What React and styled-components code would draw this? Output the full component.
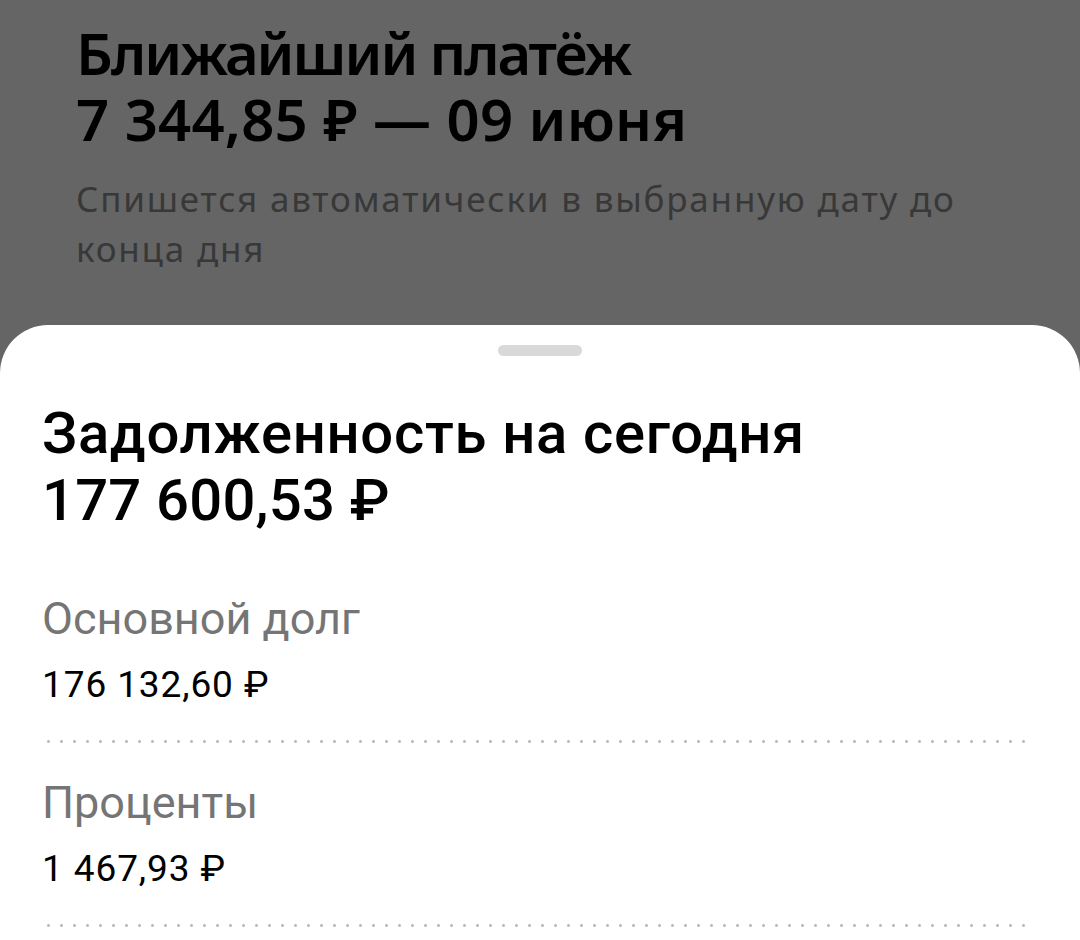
import React from 'react';
import styled, { createGlobalStyle } from 'styled-components';

const GlobalStyle = createGlobalStyle`
  html, body {
    margin: 0;
    padding: 0;
    background: #656565;
  }
  body {
    width: 1080px;
    height: 940px;
    overflow: hidden;
  }
`;

const Screen = styled.div`
  width: 1080px;
  height: 940px;
  display: flex;
  flex-direction: column;
  background: #656565;
  overflow: hidden;
`;

const Backdrop = styled.section`
  height: 325px;
  box-sizing: border-box;
  padding: 20px 60px 0 76px;
  font-family: "Noto Sans", "Open Sans", sans-serif;
`;

const TitleLine = styled.div`
  font-size: 58px;
  line-height: 66px;
  font-weight: 600;
  color: #000;
  letter-spacing: ${p => p.$spacing};
`;

const Hint = styled.p`
  margin: 22px 0 0;
  font-size: 35px;
  line-height: 50px;
  font-weight: 400;
  color: #383838;
  letter-spacing: 1.8px;
`;

const Sheet = styled.section`
  flex: 1;
  background: #fff;
  border-radius: 48px 48px 0 0;
  padding: 20px 48px 0 42px;
  font-family: Roboto, "Noto Sans", sans-serif;
  display: flex;
  flex-direction: column;
`;

const Handle = styled.div`
  align-self: center;
  margin-left: 6px;
  width: 84px;
  height: 11px;
  border-radius: 6px;
  background: #d9d9d9;
`;

const DebtTitle = styled.h2`
  margin: 44px 0 0;
  font-size: 58px;
  line-height: 67px;
  font-weight: 500;
  letter-spacing: 0.7px;
  color: #000;
`;

const DebtAmount = styled.span`
  letter-spacing: 0.2px;
`;

const Item = styled.div`
  display: flex;
  flex-direction: column;
  margin-top: ${p => (p.$first ? '58px' : '33px')};
`;

const Label = styled.div`
  font-size: 45px;
  line-height: 53px;
  color: #757575;
`;

const Value = styled.div`
  margin-top: 18px;
  font-size: 37px;
  line-height: 44px;
  letter-spacing: 0.9px;
  color: #000;
`;

const Dots = styled.div`
  margin-top: 33px;
  height: 3px;
  background-image: radial-gradient(circle, #bcbcbc 1.2px, transparent 1.7px);
  background-size: 13px 3px;
  background-repeat: repeat-x;
`;

const items = [
  { label: 'Основной долг', value: '176 132,60 ₽' },
  { label: 'Проценты', value: '1 467,93 ₽' },
];

export default function App() {
  return (
    <>
      <GlobalStyle />
      <Screen>
        <Backdrop>
          <TitleLine $spacing="-2px">Ближайший платёж</TitleLine>
          <TitleLine $spacing="0.2px">7 344,85 ₽ — 09 июня</TitleLine>
          <Hint>Спишется автоматически в выбранную дату до конца дня</Hint>
        </Backdrop>
        <Sheet>
          <Handle />
          <DebtTitle>
            Задолженность на сегодня
            <br />
            <DebtAmount>177 600,53 ₽</DebtAmount>
          </DebtTitle>
          {items.map((it, i) => (
            <Item key={it.label} $first={i === 0}>
              <Label>{it.label}</Label>
              <Value>{it.value}</Value>
              <Dots />
            </Item>
          ))}
        </Sheet>
      </Screen>
    </>
  );
}
